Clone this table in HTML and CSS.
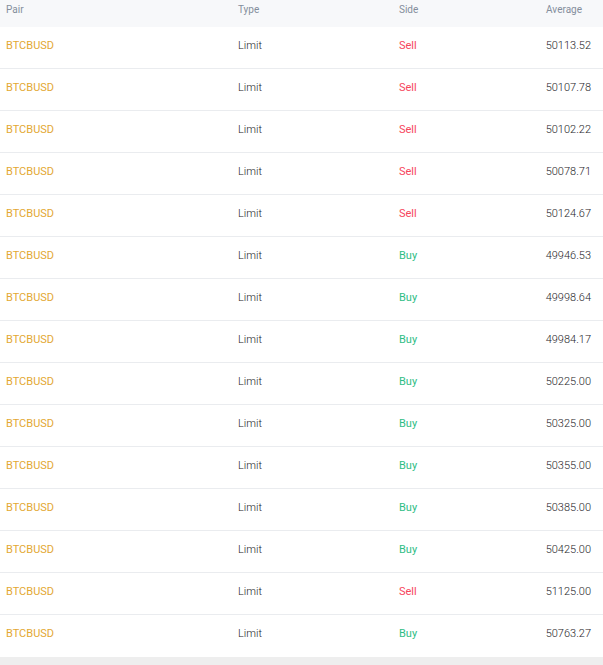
FILE: index.html
```html
<!DOCTYPE html>
<html>
<head>
<meta charset="utf-8">
<link rel="stylesheet" href="styles.css">
</head>
<body>
<div class="table">
  <div class="row head">
    <div>Pair</div><div>Type</div><div>Side</div><div class="num">Average</div>
  </div>
  <div class="row"><div class="pair">BTCBUSD</div><div>Limit</div><div class="sell">Sell</div><div class="num">50113.52</div></div>
  <div class="row"><div class="pair">BTCBUSD</div><div>Limit</div><div class="sell">Sell</div><div class="num">50107.78</div></div>
  <div class="row"><div class="pair">BTCBUSD</div><div>Limit</div><div class="sell">Sell</div><div class="num">50102.22</div></div>
  <div class="row"><div class="pair">BTCBUSD</div><div>Limit</div><div class="sell">Sell</div><div class="num">50078.71</div></div>
  <div class="row"><div class="pair">BTCBUSD</div><div>Limit</div><div class="sell">Sell</div><div class="num">50124.67</div></div>
  <div class="row"><div class="pair">BTCBUSD</div><div>Limit</div><div class="buy">Buy</div><div class="num">49946.53</div></div>
  <div class="row"><div class="pair">BTCBUSD</div><div>Limit</div><div class="buy">Buy</div><div class="num">49998.64</div></div>
  <div class="row"><div class="pair">BTCBUSD</div><div>Limit</div><div class="buy">Buy</div><div class="num">49984.17</div></div>
  <div class="row"><div class="pair">BTCBUSD</div><div>Limit</div><div class="buy">Buy</div><div class="num">50225.00</div></div>
  <div class="row"><div class="pair">BTCBUSD</div><div>Limit</div><div class="buy">Buy</div><div class="num">50325.00</div></div>
  <div class="row"><div class="pair">BTCBUSD</div><div>Limit</div><div class="buy">Buy</div><div class="num">50355.00</div></div>
  <div class="row"><div class="pair">BTCBUSD</div><div>Limit</div><div class="buy">Buy</div><div class="num">50385.00</div></div>
  <div class="row"><div class="pair">BTCBUSD</div><div>Limit</div><div class="buy">Buy</div><div class="num">50425.00</div></div>
  <div class="row"><div class="pair">BTCBUSD</div><div>Limit</div><div class="sell">Sell</div><div class="num">51125.00</div></div>
  <div class="row last"><div class="pair">BTCBUSD</div><div>Limit</div><div class="buy">Buy</div><div class="num">50763.27</div></div>
</div>
</body>
</html>
```
FILE: styles.css
```css
html, body {
  margin: 0;
  padding: 0;
  background: #eeeeee;
}
body {
  font-family: Roboto, "Liberation Sans", sans-serif;
  font-size: 11px;
  font-weight: 300;
  line-height: 13px;
  color: #1e2329;
}
.table {
  background: #ffffff;
}
.row {
  display: grid;
  grid-template-columns: 232px 161px 1fr 120px;
  align-items: start;
  box-sizing: border-box;
  height: 42px;
  padding: 12px 12px 0 6px;
  border-bottom: 1px solid #eaecef;
}
.row.last {
  border-bottom: none;
}
.row.head {
  height: 27px;
  padding-top: 4px;
  line-height: 12px;
  background: #f7f8fa;
  border-bottom: none;
  color: #848e9c;
  font-size: 10px;
  font-weight: 400;
}
.num {
  text-align: right;
}
.row.head .num {
  padding-right: 9px;
}
.pair {
  color: #e3a833;
  font-weight: 400;
}
.sell {
  color: #f6465d;
  font-weight: 400;
}
.buy {
  color: #2ebd85;
  font-weight: 400;
}
```
